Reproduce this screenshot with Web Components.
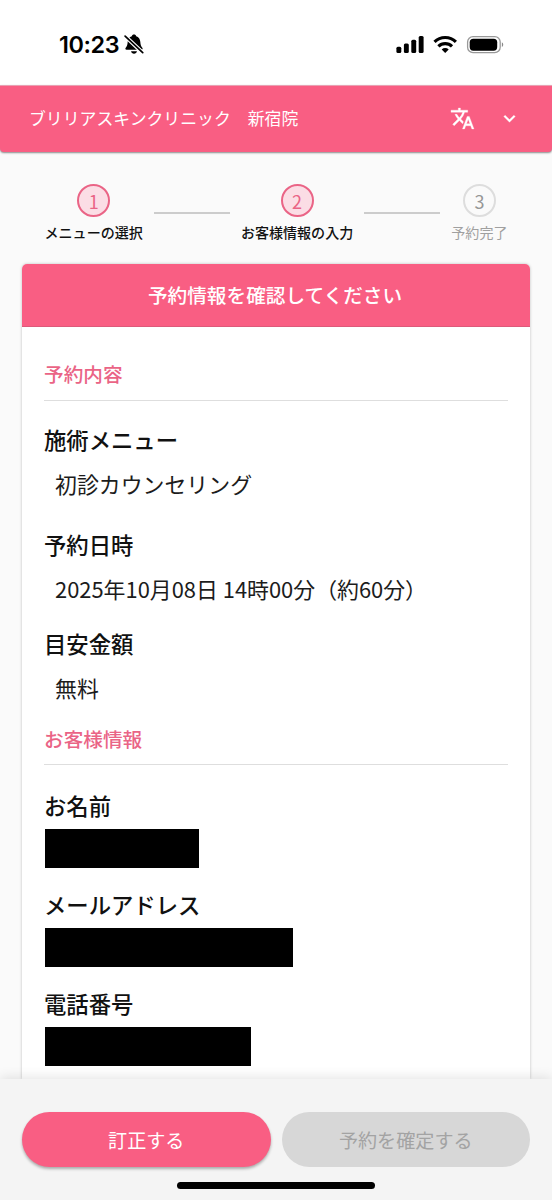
<!DOCTYPE html>
<html lang="ja">
<head>
<meta charset="utf-8">
<title>予約情報の確認</title>
<style>
html,body{margin:0;padding:0}
body{width:552px;height:1200px;overflow:hidden;background:#fafafa;color:#111;font-family:"Noto Sans CJK JP",sans-serif}
</style>
</head>
<body>
<booking-page></booking-page>
<script>
function define(name, html) {
  const template = document.createElement('template');
  template.innerHTML = html;
  customElements.define(name, class extends HTMLElement {
    constructor() {
      super();
      this.attachShadow({ mode: 'open' }).append(template.content.cloneNode(true));
    }
  });
}

define('status-bar', `
<style>
:host{display:flex;box-sizing:border-box;height:85px;padding:0 48.500px 0 59px;background:#fff;justify-content:space-between;color:#000;flex:none}
.time{display:flex;height:89px;align-items:center;gap:5px;font:600 23.4px Inter,sans-serif;letter-spacing:-.4px}
.icons{display:flex;height:89px;align-items:center}
svg{display:block}
</style>
<div class="time"><span>10:23</span>
<svg width="20" height="21" viewBox="0 0 20 21"><path d="M10 .6c1.200 0 2 .7 2.200 1.600 2.500.8 3.900 2.900 4.100 5.600.2 3.300.9 4.800 2 6 .7.900.4 2-.9 2H2.600c-1.300 0-1.600-1.100-.9-2 1.100-1.200 1.800-2.700 2-6C3.900 5.100 5.300 3 7.800 2.200 8 1.300 8.800.6 10 .6z"/><path d="M7 17.200h6c-.3 1.600-1.500 2.500-3 2.500s-2.700-.9-3-2.500z"/><path d="M1.100 2.100 18.700 18.700" stroke="#fff" stroke-width="4"/><path d="M1.100 2.100 18.700 18.700" stroke="#000" stroke-width="1.700" stroke-linecap="round"/></svg></div>
<div class="icons">
<svg width="108" height="20" viewBox="0 0 108 20"><rect x=".4" y="11.700" width="4.900" height="6.300" rx="1.500"/><rect x="7.900" y="8.400" width="4.900" height="9.600" rx="1.500"/><rect x="15.300" y="4.800" width="4.900" height="13.200" rx="1.500"/><rect x="22.700" y="1" width="4.900" height="17" rx="1.500"/>
<g fill="none" stroke="#000" stroke-width="3.100"><path d="M38.500 6.900a15.100 15.100 0 0 1 21.400 0"/><path d="M42.400 11.400a9.600 9.600 0 0 1 13.600 0"/></g><path d="M45.700 14.500a5.100 5.100 0 0 1 7 0L49.200 18z"/>
<rect x="71.600" y="1.600" width="32.600" height="16" rx="5.400" fill="none" stroke="#999" stroke-width="1.300"/><rect x="73.700" y="3.700" width="27.500" height="12" rx="3.600"/><path d="M105.900 7.200c1.800.8 1.800 4 0 4.800z" fill="#888"/></svg>
</div>`);

define('app-header', `
<style>
:host{display:flex;box-sizing:border-box;height:66.500px;padding:0 31.500px 1px 29px;align-items:center;background:#f95e83;color:#fff;border-top:1px solid #e9a0b2;box-shadow:0 1px 2px rgba(0,0,0,.45);border-radius:0 0 4px 4px;flex:none;font-size:16.870px}
.name{flex:1;white-space:pre;margin-top:-1.500px}
svg{display:block}
.lang{margin-right:22.500px}
</style>
<span class="name"><slot></slot></span>
<svg class="lang" width="25" height="25" viewBox="0 0 24 24" fill="#fff" stroke="#fff" stroke-width=".3"><path d="M12.870 15.070l-2.540-2.510.03-.03A17.520 17.520 0 0 0 14.070 6H17V4h-7V2H8v2H1v1.990h11.170C11.500 7.920 10.440 9.750 9 11.350 8.070 10.320 7.300 9.190 6.690 8h-2c.73 1.630 1.730 3.170 2.980 4.560l-5.090 5.020L4 19l5-5 3.110 3.110.76-2.040zM18.500 10h-2L12 22h2l1.120-3h4.750L21 22h2l-4.500-12zm-2.620 7l1.620-4.330L19.120 17h-3.240z"/></svg>
<svg width="23" height="23" viewBox="0 0 24 24" fill="#fff" stroke="#fff" stroke-width=".3"><path d="M7.410 8.590 12 13.170l4.590-4.580L18 10l-6 6-6-6z"/></svg>`);

define('step-item', `
<style>
:host{display:flex;flex-direction:column;align-items:center;font-size:14.050px;font-weight:500;line-height:20px;color:#111;white-space:nowrap}
.circle{box-sizing:border-box;width:33px;height:33px;border:2.500px solid #ea6486;border-radius:50%;background:#fbdde5;color:#ea6486;display:flex;align-items:center;justify-content:center;font-size:18px;font-weight:400;margin-bottom:4.500px}
:host([pending]){color:#a0a0a0;font-weight:400}
:host([pending]) .circle{background:#fafafa;border-color:#ddd;color:#969696}
</style>
<span class="circle"><slot name="number"></slot></span><slot></slot>`);

define('step-list', `
<style>
:host{display:flex;box-sizing:border-box;padding:32.500px 44.500px 0;height:112px;justify-content:space-between;align-items:flex-start;flex:none}
.line{width:76px;height:2px;background:#ccc;margin-top:27.500px}
</style>
<step-item><span slot="number">1</span>メニューの選択</step-item><i class="line"></i>
<step-item><span slot="number">2</span>お客様情報の入力</step-item><i class="line"></i>
<step-item pending><span slot="number">3</span>予約完了</step-item>`);

define('info-card', `
<style>
:host{display:block;margin:0 22px;background:#fff;border-radius:5px 5px 0 0;box-shadow:0 0 3px rgba(0,0,0,.25);flex:1;min-height:0}
header{height:63px;box-sizing:border-box;border-bottom:1px solid #dc5a7a;border-radius:5px 5px 0 0;background:#f95e83;color:#fff;font-weight:500;font-size:19.650px;display:flex;align-items:center;justify-content:center;padding-right:2px}
.body{padding:29.500px 22px 0}
</style>
<header><slot name="title"></slot></header><div class="body"><slot></slot></div>`);

define('section-title', `
<style>
:host{display:block;box-sizing:border-box;height:44.500px;border-bottom:1.500px solid #dedede;color:#ea6486;font-size:19.650px;font-weight:500;line-height:36px}
</style><slot></slot>`);

define('info-field', `
<style>
:host{display:block;font-size:22.350px}
.label{height:44px;line-height:44px;font-weight:500;color:#111}
.value{height:45px;line-height:45px;padding-left:11px;font-size:21.900px;color:#1c1c1c;white-space:nowrap}
</style><div class="label"><slot name="label"></slot></div><div class="value"><slot></slot></div>`);

define('masked-field', `
<style>
:host{display:block;height:98.800px}
.label{height:46px;line-height:44px;font-size:22.350px;font-weight:500;color:#111}
.mask{height:39.500px;width:var(--mask-width);background:#000;margin-left:1px}
</style><div class="label"><slot></slot></div><div class="mask"></div>`);

define('pill-button', `
<style>
:host{display:flex;height:55px;flex:1;border-radius:28px;background:#f95e83;color:#fff;align-items:center;justify-content:center;font-size:19.100px;box-shadow:0 2px 3px rgba(0,0,0,.3)}
:host([disabled]){background:#d7d7d7;color:#a3a3a3;box-shadow:none}
</style><slot></slot>`);

define('action-bar', `
<style>
:host{display:block;box-sizing:border-box;height:121px;background:#f4f4f4;padding:33px 22px 0;box-shadow:0 -1px 12px rgba(0,0,0,.12);position:relative;flex:none}
.row{display:flex;gap:11px}
.home{width:198px;height:7px;border-radius:4px;background:#000;margin:15px auto 0}
</style>
<div class="row"><pill-button>訂正する</pill-button><pill-button disabled>予約を確定する</pill-button></div><div class="home"></div>`);

define('booking-page', `
<style>
:host{display:flex;flex-direction:column;width:552px;height:1200px;overflow:hidden;background:#fafafa}
.first{margin-bottom:16.500px}
.a{margin-bottom:15.700px}.b{margin-bottom:10px}.c{margin-bottom:11.300px}
.second{margin-bottom:17.500px}
</style>
<status-bar></status-bar>
<app-header>ブリリアスキンクリニック　新宿院</app-header>
<step-list></step-list>
<info-card><span slot="title">予約情報を確認してください</span>
<section-title class="first">予約内容</section-title>
<info-field class="a"><span slot="label">施術メニュー</span>初診カウンセリング</info-field>
<info-field class="b"><span slot="label">予約日時</span>2025年10月08日 14時00分（約60分）</info-field>
<info-field class="c"><span slot="label">目安金額</span>無料</info-field>
<section-title class="second">お客様情報</section-title>
<masked-field style="--mask-width:153.500px">お名前</masked-field>
<masked-field style="--mask-width:248px">メールアドレス</masked-field>
<masked-field style="--mask-width:206px">電話番号</masked-field>
</info-card>
<action-bar></action-bar>
`);
</script>
</body>
</html>
